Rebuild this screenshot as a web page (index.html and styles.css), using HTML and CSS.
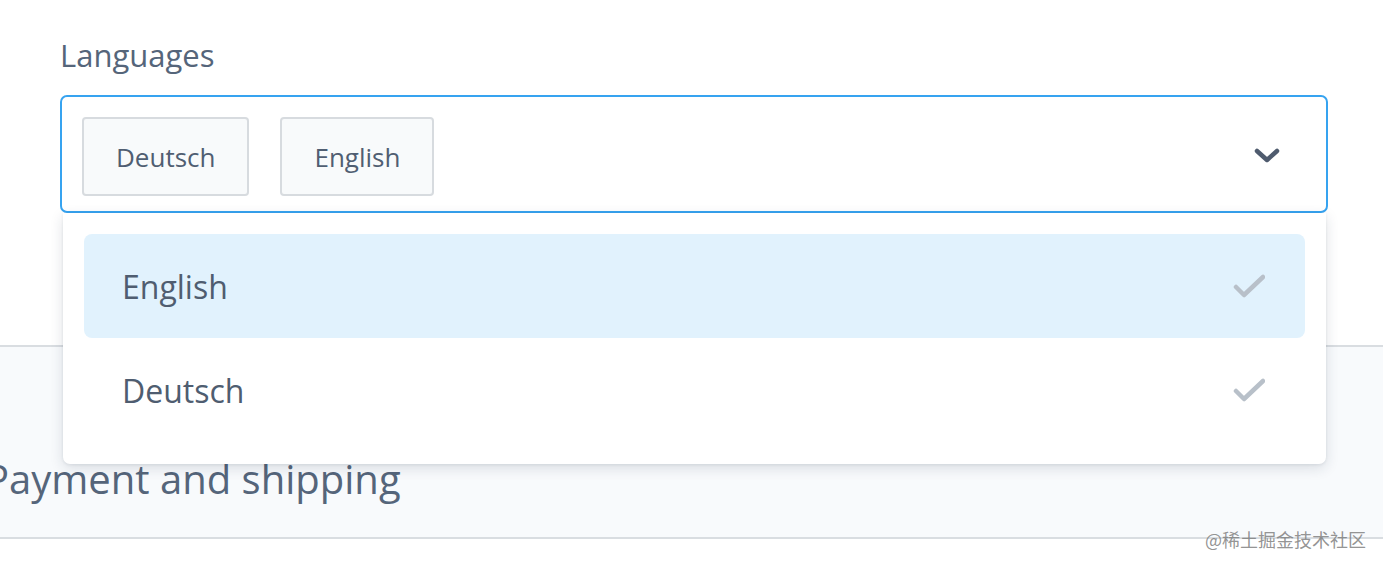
FILE: index.html
```html
<!DOCTYPE html>
<html lang="en">
<head>
<meta charset="utf-8">
<title>Languages</title>
<link rel="stylesheet" href="styles.css">
</head>
<body>
<div class="page">
  <div class="field">
    <div class="label">Languages</div>
    <div class="select">
      <div class="tags">
        <span class="tag">Deutsch</span>
        <span class="tag">English</span>
      </div>
      <svg class="chevron" width="26" height="16" viewBox="0 0 26 16"><path d="M3 3 L13 12 L23 3" fill="none" stroke="#4f5b6e" stroke-width="4.5" stroke-linecap="round" stroke-linejoin="round"/></svg>
      <div class="menu">
        <div class="option active">
          <span>English</span>
          <svg class="check" width="32" height="24" viewBox="0 0 32 24"><path d="M3 13 L11 21 L30 3" fill="none" stroke="#b8c0c9" stroke-width="4.5" stroke-linecap="round" stroke-linejoin="round"/></svg>
        </div>
        <div class="option">
          <span>Deutsch</span>
          <svg class="check" width="32" height="24" viewBox="0 0 32 24"><path d="M3 13 L11 21 L30 3" fill="none" stroke="#b8c0c9" stroke-width="4.5" stroke-linecap="round" stroke-linejoin="round"/></svg>
        </div>
      </div>
    </div>
  </div>
  <section class="band">
    <h2 class="band-title">Payment and shipping</h2>
  </section>
  <div class="watermark">@稀土掘金技术社区</div>
</div>
</body>
</html>
```
FILE: styles.css
```css
html, body {
  margin: 0;
  padding: 0;
  background: #ffffff;
}
body {
  font-family: "Open Sans", "Noto Sans", sans-serif;
  color: #4f5d70;
}
.page {
  position: relative;
  width: 1383px;
  height: 569px;
  overflow: hidden;
}
.field {
  padding: 36px 55px 0 60px;
  height: 309px;
}
.label {
  font-size: 31px;
  line-height: 38px;
  margin-bottom: 21px;
  color: #55657a;
}
.select {
  position: relative;
  height: 118px;
  box-sizing: border-box;
  border: 2px solid #36a3f0;
  border-radius: 7px;
  padding: 20px 46px 0 20px;
  display: flex;
  align-items: flex-start;
  justify-content: space-between;
  background: #fff;
}
.tags {
  display: flex;
  gap: 31px;
}
.tag {
  display: flex;
  align-items: center;
  height: 79px;
  box-sizing: border-box;
  padding: 0 32px;
  border: 2px solid #d7dbdf;
  border-radius: 4px;
  background: #f8fafb;
  font-size: 26px;
  color: #505e72;
}
.chevron {
  margin-top: 31px;
}
.menu {
  position: absolute;
  top: calc(100% + 2px);
  left: 1px;
  right: 0px;
  background: #fff;
  border-radius: 0 0 7px 7px;
  box-shadow: 0 4px 14px rgba(30, 45, 70, 0.14), 0 1px 3px rgba(30, 45, 70, 0.08);
  padding: 21px 21px 22px;
  z-index: 2;
}
.option {
  display: flex;
  align-items: center;
  justify-content: space-between;
  height: 104px;
  padding: 0 40px 0 38px;
  border-radius: 8px;
  font-size: 32px;
  color: #4f5d70;
}
.option.active {
  background: #e1f2fd;
}
.band {
  height: 194px;
  box-sizing: border-box;
  background: #f8fafc;
  border-top: 2px solid #d9dde1;
  border-bottom: 2px solid #d9dde1;
  margin: 0;
}
.band-title {
  margin: 0 0 0 -15px;
  padding-top: 104px;
  font-size: 40px;
  line-height: 56px;
  font-weight: 400;
  color: #55657a;
  white-space: nowrap;
}
.watermark {
  position: absolute;
  right: 17px;
  bottom: 17px;
  font-family: "Noto Sans CJK SC", sans-serif;
  font-size: 18px;
  color: rgba(120, 120, 120, 0.8);
  z-index: 3;
}
```
